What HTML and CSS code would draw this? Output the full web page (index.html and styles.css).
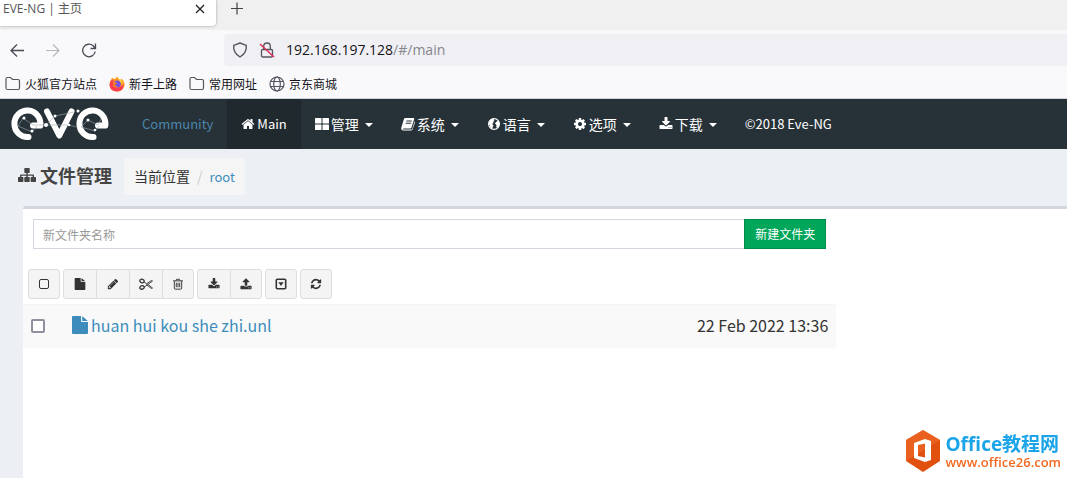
FILE: index.html
```html
<!DOCTYPE html>
<html lang="zh-CN">
<head>
<meta charset="utf-8">
<meta name="viewport" content="width=device-width, initial-scale=1">
<title>EVE-NG | 主页</title>
<link rel="stylesheet" href="styles.css">
</head>
<body>
<svg class="sprite" aria-hidden="true">
  <symbol id="folder" viewBox="0 0 16 16"><path d="M1 4V3q0-1.500 1.500-1.500h3l2 2h5.500q1.500 0 1.500 1.500v7q0 1.500-1.500 1.500H2.500Q1 13.500 1 12z" fill="none" stroke="currentColor" stroke-width="1.200"/></symbol>
  <symbol id="home" viewBox="0 0 1792 1792"><path d="M1472 992v480q0 26-19 45t-45 19h-384v-384h-256v384h-384q-26 0-45-19t-19-45v-480q0-1 .5-3t.5-3l575-474 575 474q1 2 1 6zm223-69l-62 74q-8 9-21 11h-3q-13 0-21-7l-692-577-692 577q-12 8-24 7-13-2-21-11l-62-74q-8-10-7-23.500t11-21.500l719-599q32-26 76-26t76 26l244 204v-195q0-14 9-23t23-9h192q14 0 23 9t9 23v408l219 182q10 8 11 21.500t-7 23.500z"/></symbol>
  <symbol id="grid" viewBox="0 0 14 14"><rect x="0" y="1" width="6.500" height="5.500" rx=".6"/><rect x="7.500" y="1" width="6.500" height="5.500" rx=".6"/><rect x="0" y="7.500" width="6.500" height="5.500" rx=".6"/><rect x="7.500" y="7.500" width="6.500" height="5.500" rx=".6"/></symbol>
  <symbol id="book" viewBox="0 0 14 14"><path fill-rule="evenodd" d="M4.300 1h8.200q1 0 .7 1l-2.700 8.500q-.3 1-1.300 1H2.500q-.8 0-.7.500.2.500 1 .5h7.500q.7 0 .9-.6l2.300-7.400q.7.400.4 1.200L11.500 12.500q-.4 1-1.500 1H2.300Q.3 13.500.2 11.500q0-.8.400-1.800L2.800 2.400Q3.200 1 4.300 1zM5.500 3.500l-.3 1h5.500l.3-1zm-.7 2.200-.3 1H10l.3-1z"/></symbol>
  <symbol id="globe" viewBox="0 0 14 14"><circle cx="7" cy="7" r="5.400" fill="none" stroke="currentColor" stroke-width="1.200"/><path d="M2 4.500Q4 1.300 7.500 1.500L6.500 3l1 .8L6 5l.5 1L5 7l1.500 1.300-.8 1.600-.7 2.300-1.700-2-.3-2L1.500 7zM9 5l2.500-1.500L13 7l-2 4-1.800-.8L9.500 8 8 6.500z"/></symbol>
  <symbol id="cog" viewBox="0 0 1792 1792"><path d="M1152 896q0-106-75-181t-181-75-181 75-75 181 75 181 181 75 181-75 75-181zm512-109v222q0 12-8 23t-20 13l-185 28q-19 54-39 91 35 50 107 138 10 12 10 25t-9 23q-27 37-99 108t-94 71q-12 0-26-9l-138-108q-44 23-91 38-16 136-29 186-7 28-36 28h-222q-14 0-24.500-8.500t-11.500-21.500l-28-184q-49-16-90-37l-141 107q-10 9-25 9-14 0-25-11-126-114-165-168-7-10-7-23 0-12 8-23 15-21 51-66.500t54-70.500q-27-50-41-99l-183-27q-13-2-21-12.500t-8-23.500v-222q0-12 8-23t19-13l186-28q14-46 39-92-40-57-107-138-10-12-10-24 0-10 9-23 26-36 98.500-107.500t94.500-71.500q13 0 26 10l138 107q44-23 91-38 16-136 29-186 7-28 36-28h222q14 0 24.500 8.500t11.500 21.500l28 184q49 16 90 37l142-107q9-9 24-9 13 0 25 10 129 119 165 170 7 8 7 22 0 12-8 23-15 21-51 66.500t-54 70.500q26 50 41 98l183 28q13 2 21 12.500t8 23.500z"/></symbol>
  <symbol id="download" viewBox="0 0 1792 1792"><path d="M1344 1344q0-26-19-45t-45-19-45 19-19 45 19 45 45 19 45-19 19-45zm256 0q0-26-19-45t-45-19-45 19-19 45 19 45 45 19 45-19 19-45zm128-224v320q0 40-28 68t-68 28h-1472q-40 0-68-28t-28-68v-320q0-40 28-68t68-28h465l135 136q58 56 136 56t136-56l136-136h464q40 0 68 28t28 68zm-325-569q17 41-14 70l-448 448q-18 19-45 19t-45-19l-448-448q-31-29-14-70 17-39 59-39h256v-448q0-26 19-45t45-19h256q26 0 45 19t19 45v448h256q42 0 59 39z"/></symbol>
  <symbol id="upload" viewBox="0 0 1792 1792"><path d="M1344 1472q0-26-19-45t-45-19-45 19-19 45 19 45 45 19 45-19 19-45zm256 0q0-26-19-45t-45-19-45 19-19 45 19 45 45 19 45-19 19-45zm128-224v320q0 40-28 68t-68 28h-1472q-40 0-68-28t-28-68v-320q0-40 28-68t68-28h427q21 56 70.500 92t110.500 36h256q61 0 110.500-36t70.500-92h427q40 0 68 28t28 68zm-325-648q-17 40-59 40h-256v448q0 26-19 45t-45 19h-256q-26 0-45-19t-19-45v-448h-256q-42 0-59-40-17-39 14-69l448-448q18-19 45-19t45 19l448 448q31 30 14 69z"/></symbol>
  <symbol id="file" viewBox="0 0 16 18"><path d="M1 0h8v5q0 1 1 1h6v11q0 1-1 1H1q-1 0-1-1V1q0-1 1-1zm9.200.2q.4.200.8.600l4 3.400q.4.300.6.800h-5.400z"/></symbol>
  <symbol id="pencil" viewBox="0 0 1792 1792"><path d="M491 1536l91-91-235-235-91 91v107h128v128h107zm523-928q0-22-22-22-10 0-17 7l-542 542q-7 7-7 17 0 22 22 22 10 0 17-7l542-542q7-7 7-17zm-54-192l416 416-832 832h-416v-416zm683 96q0 53-37 90l-166 166-416-416 166-165q36-38 90-38 53 0 91 38l235 234q37 39 37 91z"/></symbol>
  <symbol id="scissors" viewBox="0 0 14 14"><g fill="none" stroke="currentColor"><ellipse cx="3" cy="4" rx="2.200" ry="1.700" transform="rotate(20 3 4)" stroke-width="1.300"/><ellipse cx="3" cy="10.500" rx="2.200" ry="1.700" transform="rotate(-20 3 10.500)" stroke-width="1.300"/><path d="M5 5l2.500 1.700 5-3.200 1 .5-6 4.500L5 10M7 7.500l5.500 4 1-.5-5-4" stroke-width=".9"/></g></symbol>
  <symbol id="trash" viewBox="0 0 14 14"><path d="M2.700 3.500v8.300q0 1.200 1 1.200h6.600q1 0 1-1.200V3.500M1.300 3.300h11.400M4.700 3 5.300 1.500h3.400L9.300 3M5 5.500v5.300m2-5.300v5.300m2-5.300v5.300" fill="none" stroke="currentColor" stroke-width="1.100"/></symbol>
  <symbol id="square" viewBox="0 0 14 14"><rect x="2.500" y="2.500" width="9" height="9" rx="1.500" fill="none" stroke="currentColor" stroke-width="1"/></symbol>
  <symbol id="caret-square" viewBox="0 0 14 14"><rect x="2.300" y="2.300" width="9.400" height="9.400" rx="1" fill="none" stroke="currentColor" stroke-width="1.600"/><path d="M4.300 5.200h5.400L7 9z"/></symbol>
  <symbol id="refresh" viewBox="0 0 1792 1792"><path d="M1639 1056q0 5-1 7-64 268-268 434.500t-478 166.500q-146 0-282.500-55t-243.500-157l-129 129q-19 19-45 19t-45-19-19-45v-448q0-26 19-45t45-19h448q26 0 45 19t19 45-19 45l-137 137q71 66 161 102t187 36q134 0 250-65t186-179q11-17 53-117 8-23 30-23h192q13 0 22.500 9.500t9.500 22.500zm25-800v448q0 26-19 45t-45 19h-448q-26 0-45-19t-19-45 19-45l138-138q-148-137-349-137-134 0-250 65t-186 179q-11 17-53 117-8 23-30 23h-199q-13 0-22.500-9.500t-9.500-22.500v-7q65-268 270-434.500t480-166.500q146 0 284 55.500t245 156.500l130-129q19-19 45-19t45 19 19 45z"/></symbol>
</svg>

<header class="browser">
  <div class="tabs">
    <div class="tab">
      <span class="tab-title">EVE-NG | 主页</span>
      <button class="plain" type="button" aria-label="关闭标签页"><svg class="i16" viewBox="0 0 16 16"><path d="M4 4l8 8m0-8l-8 8" fill="none" stroke="#222" stroke-width="1.300"/></svg></button>
    </div>
    <button class="plain" type="button" aria-label="新建标签页"><svg class="i16" viewBox="0 0 16 16"><path d="M8 2.500v12M2 8.500h12" fill="none" stroke="#444" stroke-width="1.200"/></svg></button>
  </div>
  <div class="toolbar">
    <div class="history">
      <button class="plain" type="button" aria-label="后退"><svg class="i16" viewBox="0 0 16 16"><path d="M15 8.500H2m6-6l-6 6 6 6" fill="none" stroke="#4a4a55" stroke-width="1.300"/></svg></button>
      <button class="plain" type="button" aria-label="前进" disabled><svg class="i16" viewBox="0 0 16 16"><path d="M1 8.500h13m-6-6l6 6-6 6" fill="none" stroke="#b7b7bd" stroke-width="1.200"/></svg></button>
      <button class="plain" type="button" aria-label="刷新"><svg class="i16" viewBox="0 0 16 16"><path d="M14.200 9.500a6.300 6.300 0 1 1-2-5.700L14 6M14.500 1.500v5h-5" fill="none" stroke="#4a4a55" stroke-width="1.300"/></svg></button>
    </div>
    <div class="address">
      <svg class="i16" viewBox="0 0 16 16"><path d="M8 1l6.300 2.300Q15 11 8 15 1 11 1.700 3.300z" fill="none" stroke="#55555f" stroke-width="1.400" stroke-linejoin="round"/></svg>
      <svg class="i16" viewBox="0 0 16 16"><g fill="none" stroke="#55555f" stroke-width="1.300"><rect x="2.500" y="7.500" width="11" height="7.500" rx="1.200"/><path d="M4.700 7.500V4.300a3.300 3.300 0 0 1 6.600 0v3.200"/></g><path d="M1 2l14 13" stroke="#e22850" stroke-width="1.400"/></svg>
      <span class="url">192.168.197.128<span class="path">/#/main</span></span>
    </div>
  </div>
  <nav class="bookmarks" aria-label="书签">
    <a href="#"><svg class="i16"><use href="#folder"/></svg>火狐官方站点</a>
    <a href="#"><svg class="i16" viewBox="0 0 16 16"><path d="M8 .5q1 1 1.300 2.200L12 4l.5-1.500Q16 6 15.500 9.500 14 15.500 8 15.500.8 15 .5 8.500.5 5 2.500 3l.5-1.500L4.500 3Q7 3 8 .5z" fill="#ff9a1f"/><path d="M1 6q2-3 4-2.500L4 6q0 5.500 5 5.500 3 0 5.500-4 .8 7.500-6.500 8Q1 15 .5 9z" fill="#fb3c53"/><circle cx="8.300" cy="8" r="3.500" fill="#7450e8"/><path d="M4 6.500q3-.7 4 .8-1 1.700-2.500 1.500Q6.800 11 9 10.500 6 13 4 10z" fill="#ff7b1b"/><path d="M9.500 2q4.500 2.500 4.500 7-1-3-3-3.500Q10 4 9.500 2z" fill="#ffdb3e"/></svg>新手上路</a>
    <a href="#"><svg class="i16"><use href="#folder"/></svg>常用网址</a>
    <a href="#"><svg class="i16" viewBox="0 0 16 16"><g fill="none" stroke="currentColor" stroke-width="1.200"><circle cx="8" cy="8" r="7"/><ellipse cx="8" cy="8" rx="3.300" ry="7"/><path d="M1.500 5.500h13m-13 5h13"/></g></svg>京东商城</a>
  </nav>
</header>

<nav class="navbar">
  <a class="brand" href="#" aria-label="EVE">
    <svg class="logo" viewBox="0 0 98 34"><g fill="none" stroke="#fff" stroke-width="6" stroke-linecap="round" stroke-linejoin="round"><path d="M22 18.500H29.300A13 13.300 0 1 0 17.500 30"/><path d="M36 4.500L48.300 28.500 60.500 4.500"/><path d="M87 18.500H94.300A13 13.300 0 1 0 82.500 30"/></g><g fill="none" stroke="#9fa8ac" stroke-width=".6"><path d="M12 11l-5 8 14 6 5-6M12 11l10 7 13 0 9-9 19-4M35 18l23 0 7 2M77 13l10 5 3-6M77 13l-7 7 14 4 4-5"/></g><g fill="#fff"><circle cx="13" cy="11" r="1.500"/><circle cx="21" cy="24" r="1.500"/><circle cx="35" cy="18" r="2"/><circle cx="44" cy="9" r="1.500"/><circle cx="67" cy="4" r="1.500"/><circle cx="58" cy="18" r="1.300"/><circle cx="77" cy="13" r="1.500"/><circle cx="84" cy="23" r="1.300"/></g></svg>
  </a>
  <a class="item community" href="#">Community</a>
  <a class="item active" href="#"><svg class="i14"><use href="#home"/></svg>Main</a>
  <a class="item cn" href="#"><svg class="i14"><use href="#grid"/></svg>管理<span class="caret"></span></a>
  <a class="item cn" href="#"><svg class="i14"><use href="#book"/></svg>系统<span class="caret"></span></a>
  <a class="item cn" href="#"><svg class="i14"><use href="#globe"/></svg>语言<span class="caret"></span></a>
  <a class="item cn" href="#"><svg class="i14"><use href="#cog"/></svg>选项<span class="caret"></span></a>
  <a class="item cn" href="#"><svg class="i14"><use href="#download"/></svg>下载<span class="caret"></span></a>
  <a class="item" href="#">©2018 Eve-NG</a>
</nav>

<main>
  <div class="heading">
    <h1><svg class="i18" viewBox="0 0 18 18"><path d="M7 2h4q.7 0 .7.700v3.600q0 .7-.7.700H9.700v1.500H15q1 0 1 1V11h1.300q.7 0 .7.700v3.600q0 .7-.7.700h-4q-.7 0-.7-.7v-3.600q0-.7.700-.7h1.300V9.800H9.700V11H11q.7 0 .7.700v3.600q0 .7-.7.700H7q-.7 0-.7-.7v-3.600q0-.7.700-.7h1.300V9.800H3.400V11h1.300q.7 0 .7.700v3.600q0 .7-.7.700h-4q-.7 0-.7-.7v-3.600Q0 11 .7 11H2V9.500q0-1 1-1h5.300V7H7q-.7 0-.7-.7V2.700Q6.300 2 7 2z"/></svg>文件管理</h1>
    <ol class="crumbs"><li>当前位置</li><li><a href="#">root</a></li></ol>
  </div>
  <section class="box">
    <div class="column">
      <form class="create">
        <input type="text" placeholder="新文件夹名称" aria-label="新文件夹名称">
        <button type="button">新建文件夹</button>
      </form>
      <div class="actions">
        <div class="group"><button type="button" aria-label="全选"><svg class="i14"><use href="#square"/></svg></button></div>
        <div class="group">
          <button type="button" aria-label="新建实验"><svg class="i12"><use href="#file"/></svg></button>
          <button type="button" aria-label="重命名"><svg class="i12"><use href="#pencil"/></svg></button>
          <button type="button" aria-label="移动"><svg class="i14"><use href="#scissors"/></svg></button>
          <button type="button" aria-label="删除"><svg class="i12"><use href="#trash"/></svg></button>
        </div>
        <div class="group">
          <button type="button" aria-label="导入"><svg class="i12"><use href="#download"/></svg></button>
          <button type="button" aria-label="导出"><svg class="i12"><use href="#upload"/></svg></button>
        </div>
        <div class="group"><button type="button" aria-label="展开"><svg class="i14"><use href="#caret-square"/></svg></button></div>
        <div class="group"><button type="button" aria-label="刷新列表"><svg class="i12"><use href="#refresh"/></svg></button></div>
      </div>
      <table class="files">
        <tbody><tr>
          <td class="pick"><input type="checkbox" aria-label="选择 huan hui kou she zhi.unl"></td>
          <td><a href="#"><svg class="doc"><use href="#file"/></svg>huan hui kou she zhi.unl</a></td>
          <td class="date">22 Feb 2022 13:36</td>
        </tr></tbody>
      </table>
    </div>
  </section>
</main>

<a class="watermark" href="#">
  <svg viewBox="0 0 36 44"><path d="M18 1L35 11v21L18 43 1 32V11z" fill="#e2500f"/><path d="M18 1L35 11 1 32V11z" fill="#f0702d" opacity=".55"/><path fill-rule="evenodd" d="M9 14l11-4 6 2v19l-6 2-11-4zM13 16v11l7 1.500v-14z" fill="#fff"/></svg>
  <span class="words"><strong>Office教程网</strong><span>www.office26.com</span></span>
</a>
</body>
</html>
```
FILE: styles.css
```css
* { box-sizing: border-box; }
body {
  margin: 0;
  min-height: 100vh;
  display: flex;
  flex-direction: column;
  background: #ecf0f5;
  color: #333;
  font: 14px/20px "Noto Sans CJK SC", sans-serif;
}
a { color: #3c8dbc; text-decoration: none; }
button, input { font: inherit; color: inherit; }
svg { fill: currentColor; flex: none; display: block; }
.sprite { position: absolute; width: 0; height: 0; }
.i12 { width: 12px; height: 12px; }
.i14 { width: 14px; height: 14px; }
.i16 { width: 16px; height: 16px; }
.i18 { width: 18px; height: 18px; }
.plain { border: 0; padding: 0; background: none; }

.browser { background: #f9f9fb; border-bottom: 1px solid #cfd2dc; }
.tabs { height: 30px; display: flex; align-items: flex-start; gap: 13px; background: #f0f0f0; }
.tab {
  width: 216px;
  height: 26px;
  padding: 0 8px 8px 3px;
  display: flex;
  align-items: center;
  justify-content: space-between;
  background: #fff;
  border-radius: 0 0 4px 0;
  box-shadow: 0 0 3px #999;
  color: #555;
  font: 12px/18px "Open Sans", "Noto Sans CJK SC", sans-serif;
}
.toolbar { height: 40px; display: flex; align-items: center; }
.history { width: 224px; padding-left: 9px; display: flex; gap: 20px; }
.address {
  flex: 1;
  height: 32px;
  padding: 0 8px;
  display: flex;
  align-items: center;
  gap: 11px;
  background: #f0f0f4;
  border-radius: 4px 0 0 4px;
}
.url { color: #15141a; font: 14px/20px "Open Sans", sans-serif; }
.path { color: #85858c; }
.bookmarks { height: 28px; padding: 0 5px; display: flex; align-items: center; gap: 12px; }
.bookmarks a { display: flex; align-items: center; gap: 4px; color: #15141a; font-size: 12px; }
.bookmarks svg { color: #55555f; }

.navbar { height: 50px; display: flex; background: #263238; }
.brand { width: 128px; padding: 8px 0 0 11px; }
.logo { width: 98px; height: 34px; }
.item { padding: 0 14px; display: flex; align-items: center; gap: 2px; color: #fff; font-size: 13px; }
.community { color: #4d86ab; }
.active { background: #1f292e; }
.cn { font-size: 14px; }
.caret { margin: 2px 0 0 4px; border: 4px solid transparent; border-top-color: #fff; border-bottom: 0; }

main { flex: 1; display: flex; flex-direction: column; }
.heading { height: 57px; padding: 9px 18px 0; display: flex; align-items: flex-start; gap: 12px; }
h1 { margin: 0; display: flex; align-items: center; gap: 4px; font-size: 18px; line-height: 34px; font-weight: 700; color: #444; }
.crumbs { margin: 0; padding: 8px 10px; display: flex; list-style: none; background: #f5f5f5; border-radius: 4px; }
.crumbs li + li::before { content: "/"; padding: 0 7px; color: #ccc; }
.crumbs a { font-size: 13px; }

.box { flex: 1; margin-left: 23px; background: #fff; border-top: 3px solid #d2d6de; border-top-left-radius: 3px; }
.column { width: 78%; padding-right: 1px; }
.create { padding: 10px 10px 20px; display: flex; }
.create input { flex: 1; min-width: 0; height: 30px; padding: 5px 9px; border: 1px solid #d2d6de; border-right: 0; border-radius: 0; background: #fff; font-size: 12px; }
.create input::placeholder { color: #999; }
.create button { width: 82px; height: 30px; padding: 0; border: 1px solid #008d4c; background: #00a65a; color: #fff; font-size: 12px; }
.actions { padding: 0 5px 5px; display: flex; gap: 3px; }
.group { display: flex; }
.group button { width: 34px; height: 30px; margin-left: -1px; padding: 0; display: grid; place-items: center; border: 1px solid #ddd; background: #f4f4f4; color: #333; }
.group button:first-child { margin-left: 0; border-radius: 3px 0 0 3px; }
.group button:last-child { width: 32px; border-radius: 0 3px 3px 0; }
.group button:only-child { border-radius: 3px; }
.files { width: 100%; border-collapse: collapse; background: #f9f9f9; font-size: 16px; line-height: 24px; }
.files td { height: 43px; padding: 7px 8px 9px; border-top: 1px solid #f4f4f4; }
.files .pick { width: 41px; }
.pick input { appearance: none; display: block; width: 14px; height: 14px; margin: 2px 0 0; border: 2px solid #8f8f9d; border-radius: 2px; background: #fff; }
.files a { display: flex; align-items: center; gap: 3px; }
.doc { width: 16px; height: 18px; }
.date { text-align: right; }

.watermark { position: fixed; right: 6px; bottom: 5px; display: flex; align-items: center; gap: 5px; color: #f26a21; }
.watermark > svg { width: 36px; height: 44px; }
.words { display: grid; font: 600 13px/15px "Open Sans", sans-serif; }
.words strong { color: #1ca4e8; font: 700 19px/22px "Open Sans", "Noto Sans CJK SC", sans-serif; }
```
